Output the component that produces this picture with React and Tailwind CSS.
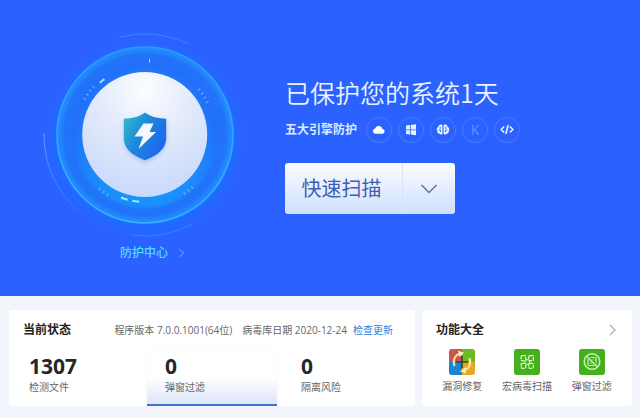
import React from "react";

const polar = (r, deg) => {
  const a = (deg * Math.PI) / 180;
  return [110 + r * Math.cos(a), 110 + r * Math.sin(a)];
};

function arc(r, from, to) {
  const [x1, y1] = polar(r, from);
  const [x2, y2] = polar(r, to);
  return `M${x1} ${y1}A${r} ${r} 0 0 1 ${x2} ${y2}`;
}

function Ticks({ angles }) {
  return angles.map((a) => {
    const [x1, y1] = polar(69, a);
    const [x2, y2] = polar(72, a);
    return (
      <line key={a} x1={x1} y1={y1} x2={x2} y2={y2} stroke="#6fd0ff" strokeWidth="1.2" opacity=".7" />
    );
  });
}

function ShieldDial() {
  return (
    <svg viewBox="0 0 220 220" className="size-[220px]" aria-hidden="true">
      <defs>
        <radialGradient id="glow">
          <stop offset="0.8" stopColor="#0a78ff" stopOpacity=".9" />
          <stop offset="1" stopColor="#2b62ff" stopOpacity="0" />
        </radialGradient>
        <radialGradient id="ring">
          <stop offset="0.7" stopColor="#2278fb" />
          <stop offset="0.8" stopColor="#226ff9" />
          <stop offset="0.92" stopColor="#2274fa" />
          <stop offset="1" stopColor="#2488fd" />
        </radialGradient>
        <linearGradient id="rim" x1="0" y1="0" x2="0" y2="1">
          <stop offset="0" stopColor="#2b98ff" />
          <stop offset="1" stopColor="#38b0ff" />
        </linearGradient>
        <linearGradient id="low" x1="0" y1="0" x2="0" y2="1">
          <stop offset="0.45" stopColor="#18a0ff" stopOpacity="0" />
          <stop offset="1" stopColor="#18a8ff" stopOpacity=".65" />
        </linearGradient>
        <radialGradient id="disc" cx=".5" cy=".14" r=".9">
          <stop offset="0" stopColor="#fbfdff" />
          <stop offset=".4" stopColor="#e4ebfb" />
          <stop offset="1" stopColor="#c6d8fc" />
        </radialGradient>
        <linearGradient id="shield" x1="0" y1="0" x2="1" y2=".6">
          <stop offset="0" stopColor="#35c0c4" />
          <stop offset=".5" stopColor="#1c88dd" />
          <stop offset="1" stopColor="#2066ee" />
        </linearGradient>
        <linearGradient id="arcLeft" x1="0" y1="0" x2="0" y2="1">
          <stop offset="0" stopColor="#4aa2ff" />
          <stop offset="1" stopColor="#4aa2ff" stopOpacity=".1" />
        </linearGradient>
        <filter id="soft" x="-30%" y="-30%" width="160%" height="160%">
          <feGaussianBlur stdDeviation="2" />
        </filter>
      </defs>
      <circle cx="110" cy="114" r="104" fill="url(#glow)" opacity=".65" />
      <circle cx="110" cy="110" r="88" fill="url(#ring)" />
      <circle cx="110" cy="110" r="73" fill="url(#low)" filter="url(#soft)" />
      <circle cx="110" cy="110" r="86" fill="none" stroke="#2196ff" strokeWidth="3" opacity=".6" filter="url(#soft)" />
      <circle cx="110" cy="110" r="88" fill="none" stroke="url(#rim)" strokeWidth="1.6" />
      <path d={arc(101, 128, 181)} fill="none" stroke="url(#arcLeft)" strokeWidth="1.1" />
      <path d={arc(101, 255, 295)} fill="none" stroke="#3a83ff" strokeWidth="1" />
      <path d={arc(101, 62, 98)} fill="none" stroke="#2f88ff" strokeWidth="1" />
      <Ticks angles={[211, 215, 219, 223, 320, 324, 328, 332, 48, 52, 56, 122, 126, 130]} />
      <path d="M114.500 34v4" stroke="#7fd8ff" strokeWidth="1" />
      <path d={arc(69, 229, 234)} fill="none" stroke="#8fe0ff" strokeWidth="2" />
      <path d={arc(67, 95, 101)} fill="none" stroke="#9be8ff" strokeWidth="2" />
      <path d={arc(67, 105, 111)} fill="none" stroke="#9be8ff" strokeWidth="2" />
      <circle cx="109.7" cy="109.5" r="62.5" fill="url(#disc)" />
      <path d="M110 90c7 5 14 6 21.500 6v18c0 11-8 18-21.500 24c-13.500-6-21.500-13-21.500-24V96c7.500 0 14.500-1 21.500-6z" fill="#7fa9f2" opacity=".5" filter="url(#soft)" />
      <path d="M110 87.500c6 4.500 13 6 21.200 6.200v19c0 10.500-7.700 17.500-21.200 22.500c-13.500-5-21.200-12-21.200-22.500v-19c8.200-.2 15.200-1.700 21.200-6.200z" fill="url(#shield)" />
      <path d="M108.500 98.500H118.500L114.500 107H121L103.500 124L108 111.500H99.500z" fill="#f4f9ff" />
    </svg>
  );
}

function CloudIcon() {
  return (
    <svg viewBox="0 0 14 14" className="size-3.5" fill="#fff" aria-hidden="true">
      <path d="M3.200 10.700a2.700 2.700 0 0 1-.2-5.300a4.100 4.100 0 0 1 7.600.6a2.400 2.400 0 0 1 .2 4.700z" />
    </svg>
  );
}

function WindowsIcon() {
  return (
    <svg viewBox="0 0 14 14" className="size-3.5" fill="#e6f3ff" aria-hidden="true">
      <path d="M2 2.600l4-.5v4.300H2zM6.800 2L12 1.300v5.100H6.800zM2 7.200h4v4.300L2 10.900zM6.800 7.200H12v5.100l-5.200-.7z" />
    </svg>
  );
}

function BrainIcon() {
  return (
    <svg viewBox="0 0 14 14" className="size-3.5" aria-hidden="true">
      <path d="M6.400 2.100C4.500.9 2.600 2 2.500 3.700C.8 4.500.3 6.400 1.200 7.700c-.3 1.800 1 3 2.400 3c.8 1.100 2.200 1.100 2.800.4zM7.600 2.100c1.900-1.200 3.800-.1 3.900 1.600c1.700.8 2.200 2.700 1.300 4c.3 1.800-1 3-2.400 3c-.8 1.100-2.200 1.100-2.800.4z" fill="#e6f6ff" />
      <path d="M4.200 3.700v2.200M2.700 7.100h1.800v1.800M9.800 3.700v2.200M11.300 7.100H9.500v1.800" stroke="#2b62ff" strokeWidth="1" fill="none" />
    </svg>
  );
}

function CodeIcon() {
  return (
    <svg viewBox="0 0 14 14" className="size-3.5" fill="none" stroke="#e6f6ff" strokeWidth="1.6" aria-hidden="true">
      <path d="M4.200 3.500L1.200 6.500l3 3M9.800 3.500l3 3l-3 3M8.200 2L5.800 11" />
    </svg>
  );
}

function Chevron({ className, d = "M4 1l5 5l-5 5" }) {
  return (
    <svg viewBox="0 0 12 12" className={className} fill="none" stroke="currentColor" strokeWidth="1.2" aria-hidden="true">
      <path d={d} />
    </svg>
  );
}

function RepairIcon() {
  return (
    <svg viewBox="0 0 26 26" className="size-[26px]" aria-hidden="true">
      <defs>
        <clipPath id="tile">
          <rect width="26" height="26" rx="3" />
        </clipPath>
      </defs>
      <g clipPath="url(#tile)">
        <path d="M0 0h13v13H0z" fill="#c95650" />
        <path d="M13 0h13v13H13z" fill="#6aba22" />
        <path d="M0 13h13v13H0z" fill="#1c84d0" />
        <path d="M13 13h13v13H13z" fill="#e0a826" />
      </g>
      <path d="M13 7v12M7 13h12" stroke="#3a4028" strokeWidth="1.600" />
      <path d="M5.500 17C3.500 10.500 6.200 6 10.500 4.800" fill="none" stroke="#fbe6a4" strokeWidth="2" />
      <path d="M9 1.500L15 3.800L10.500 8z" fill="#fff0c0" />
      <path d="M20.500 9C22.500 15.500 20 20 15.500 21.200" fill="none" stroke="#fdeaa6" strokeWidth="2" />
      <path d="M17 18L11 22.200L17 24.500z" fill="#fff0b0" />
    </svg>
  );
}

function MacroIcon() {
  return (
    <svg viewBox="0 0 26 26" className="size-[26px]" aria-hidden="true">
      <rect width="26" height="26" rx="3" fill="#45b01c" />
      <g fill="none" stroke="#d9f7c6" strokeWidth="1.300" strokeDasharray="3.600 .8">
        <rect x="7.200" y="6.700" width="4.600" height="5" rx="1" />
        <rect x="14.800" y="6.700" width="4.600" height="5" rx="1" />
        <rect x="7.200" y="14.300" width="4.600" height="5" rx="1" />
        <rect x="14.800" y="14.300" width="4.600" height="5" rx="1" />
      </g>
      <path d="M11.800 10.700h3M11.800 15.300h3M11 11.700v2.600M15.600 11.700v2.600" stroke="#d9f7c6" strokeWidth="1.100" />
    </svg>
  );
}

function PopupIcon() {
  return (
    <svg viewBox="0 0 26 26" className="size-[26px]" aria-hidden="true">
      <rect width="26" height="26" rx="3" fill="#45b01c" />
      <g fill="none" stroke="#c9f0b2">
        <rect x="9" y="8.500" width="8" height="8" rx="1" strokeWidth="1.200" />
        <path d="M11 14h4M11 11h4" strokeWidth="1" />
        <path d="M8 7l11 11" stroke="#45b01c" strokeWidth="3" />
        <circle cx="13" cy="12.500" r="7.800" strokeWidth="1.500" />
        <path d="M7.500 7l11 11" strokeWidth="1.500" />
      </g>
    </svg>
  );
}

const engines = [
  { name: "云引擎", icon: <CloudIcon /> },
  { name: "系统引擎", icon: <WindowsIcon /> },
  { name: "智能引擎", icon: <BrainIcon /> },
  { name: "K", icon: <span className="text-sm leading-none text-[#5d93ff]">K</span> },
  { name: "脚本引擎", icon: <CodeIcon /> },
];

const tools = [
  { name: "漏洞修复", icon: <RepairIcon /> },
  { name: "宏病毒扫描", icon: <MacroIcon /> },
  { name: "弹窗过滤", icon: <PopupIcon /> },
];

function Stat({ value, label, active }) {
  return (
    <button
      type="button"
      className={
        active
          ? "flex flex-1 flex-col items-start border-b-2 border-[#4270cf] bg-gradient-to-b from-white from-50% to-[#dfe6fa] px-[18px] pt-1 text-left shadow-[0_0_2px_#f0f2f8]"
          : "flex flex-1 flex-col items-start px-5 pt-1 text-left"
      }
    >
      <span className="text-[21px] leading-6 font-bold text-[#262626]">{value}</span>
      <span className="text-[10px] leading-[18px] text-[#666]">{label}</span>
    </button>
  );
}

export default function App() {
  return (
    <div className="min-h-screen bg-[#f3f5fd] font-['Open_Sans','Noto_Sans_CJK_SC',sans-serif]">
      <header className="flex h-[296px] bg-[#2b62ff] pl-[35px]">
        <div className="flex flex-col items-center pt-[25px]">
          <ShieldDial />
          <a href="#center" className="flex items-center gap-2 pl-4 text-xs leading-4 font-medium text-[#4fdcff]">
            防护中心
            <Chevron className="size-2.5 text-[#6fb2ff]" />
          </a>
        </div>
        <main className="ml-[30px] flex flex-col items-start pt-[74px]">
          <h1 className="font-['Noto_Sans_CJK_SC',sans-serif] text-[25px] leading-9 font-[350] text-[#e8f4ff]">已保护您的系统1天</h1>
          <div className="mt-[7px] flex items-center gap-[9px]">
            <span className="text-xs leading-4 font-bold text-[#dcecff]">五大引擎防护</span>
            <ul className="flex gap-1.5">
              {engines.map((e) => (
                <li key={e.name} className="flex size-[26px] items-center justify-center rounded-full border border-[#477cff]">
                  {e.icon}
                </li>
              ))}
            </ul>
          </div>
          <div className="mt-5 flex h-[51px] rounded-[3px] bg-gradient-to-b from-[#fafcff] to-[#cfe0fd]">
            <button type="button" className="w-[118px] border-r border-[#d9e3f7] pr-1 text-xl text-[#3f5fb0]">
              快速扫描
            </button>
            <button type="button" aria-label="更多扫描方式" className="flex w-[52px] items-center justify-center text-[#66759a]">
              <svg viewBox="0 0 18 10" className="h-2.5 w-[18px]" fill="none" stroke="currentColor" strokeWidth="1.5" aria-hidden="true">
                <path d="M1.500 1L9 8.500L16.500 1" />
              </svg>
            </button>
          </div>
        </main>
      </header>

      <div className="flex gap-[7px] pt-3.5 pr-2 pb-3 pl-[9px]">
        <section className="flex flex-[406] flex-col rounded-[3px] bg-white">
          <div className="flex items-center pt-3 pr-[22px] pl-3.5 text-[10px] leading-4 whitespace-nowrap text-[#666]">
            <h2 className="mr-auto text-xs leading-4 font-bold text-[#222]">当前状态</h2>
            <span>程序版本 7.0.0.1001(64位)</span>
            <span className="ml-2.5">病毒库日期 2020-12-24</span>
            <a href="#update" className="ml-1.5 text-[#2f80da]">检查更新</a>
          </div>
          <div className="mt-3 flex flex-1 gap-1">
            <Stat value="1307" label="检测文件" />
            <Stat value="0" label="弹窗过滤" active />
            <Stat value="0" label="隔离风险" />
          </div>
        </section>

        <section className="flex-[210] rounded-[3px] bg-white pb-3">
          <div className="flex items-center justify-between pt-3 pr-3.5 pl-3.5">
            <h2 className="text-xs leading-4 font-bold text-[#222]">功能大全</h2>
            <button type="button" aria-label="更多功能" className="text-[#aaa]">
              <Chevron className="size-3" />
            </button>
          </div>
          <div className="mt-[11px] grid grid-cols-3 px-2">
            {tools.map((t) => (
              <button key={t.name} type="button" className="flex flex-col items-center gap-[3px] text-[10px] leading-4 whitespace-nowrap text-[#666]">
                {t.icon}
                {t.name}
              </button>
            ))}
          </div>
        </section>
      </div>
    </div>
  );
}
